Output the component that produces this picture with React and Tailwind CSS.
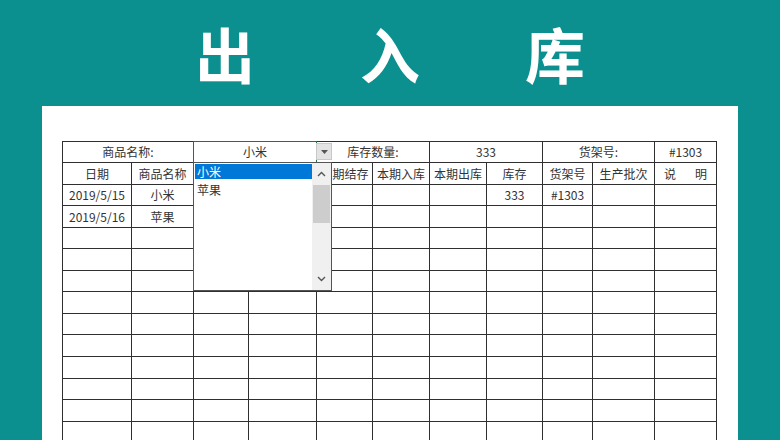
import React from 'react';

const cols = [69, 62, 55, 68, 56, 57, 57, 56, 50, 62, 62];

const rowH = [
  'h-[21px]', 'h-[22px]', 'h-[21px]', 'h-[22px]', 'h-[21px]', 'h-[22px]', 'h-[21px]',
  'h-[22px]', 'h-[21px]', 'h-[22px]', 'h-[22px]', 'h-[21px]', 'h-[22px]', 'h-[22px]',
];

// columns 3 and 4 sit under the open list, so their headers are not shown
const headers = ['日期', '商品名称', '', '', '上期结存', '本期入库', '本期出库', '库存', '货架号', '生产批次'];

const body = [
  ['2019/5/15', '小米', '', '', '', '', '', '333', '#1303', '', ''],
  ['2019/5/16', '苹果', '', '', '', '', '', '', '', '', ''],
  ...Array.from({ length: 10 }, () => Array(11).fill('')),
];

const cell = 'border border-[#2f2f2f] p-0 text-center align-middle whitespace-nowrap overflow-hidden';

const Dropdown = () => (
  <>
    {/* selected cell outline */}
    <div className="absolute left-[131px] top-0 w-[124px] h-[22px] border border-[#217346]" />
    {/* arrow button */}
    <div className="absolute left-[254px] top-[2px] w-[16px] h-[17px] bg-[#e3e3e3] border border-[#c8c8c8] flex items-center justify-center">
      <svg width="7" height="4" viewBox="0 0 7 4"><path d="M0 0h7L3.5 4z" fill="#555" /></svg>
    </div>
    {/* list */}
    <div className="absolute left-[131px] top-[21px] w-[139px] h-[129px] bg-white border border-[#555] flex">
      <div className="flex-1 flex flex-col pt-px pl-px">
        <div className="h-[15px] bg-[#0078d7] text-white leading-[15px] pl-[2px]">小米</div>
        <div className="mt-[3px] h-[16px] text-[#333] leading-[16px] pl-[2px]">苹果</div>
      </div>
      <div className="w-[19px] bg-[#f0f0f0] flex flex-col items-center">
        <div className="h-[22px] flex items-center justify-center">
          <svg width="9" height="6" viewBox="0 0 9 6"><path d="M1 5l3.5-3.5L8 5" stroke="#555" strokeWidth="1.4" fill="none" /></svg>
        </div>
        <div className="w-[17px] h-[38px] bg-[#cdcdcd]" />
        <div className="flex-1" />
        <div className="h-[22px] flex items-center justify-center">
          <svg width="9" height="6" viewBox="0 0 9 6"><path d="M1 1l3.5 3.5L8 1" stroke="#555" strokeWidth="1.4" fill="none" /></svg>
        </div>
      </div>
    </div>
  </>
);

export default function App() {
  return (
    <div
      className="w-[780px] h-[440px] overflow-hidden bg-[#0b8f8f] flex flex-col text-[12px] text-[#333]"
      style={{ fontFamily: '"Noto Sans CJK SC", "Noto Sans", sans-serif' }}
    >
      <div className="h-[106px] shrink-0 flex items-center justify-center gap-[105px] text-white font-bold text-[60px] leading-none">
        <span>出</span>
        <span>入</span>
        <span>库</span>
      </div>
      <div className="mx-[42px] flex-1 bg-white pt-[35px] pl-[20px]">
        <div className="relative w-[655px]">
          <table className="border-collapse table-fixed w-[655px]">
            <colgroup>
              {cols.map((w, i) => (
                <col key={i} style={{ width: w }} />
              ))}
            </colgroup>
            <tbody>
              <tr className={rowH[0]}>
                <td colSpan={2} className={cell}>商品名称:</td>
                <td colSpan={2} className={cell}>小米</td>
                <td colSpan={2} className={cell}>库存数量:</td>
                <td colSpan={2} className={cell}>333</td>
                <td colSpan={2} className={cell}>货架号:</td>
                <td className={cell}>#1303</td>
              </tr>
              <tr className={rowH[1]}>
                {headers.map((h, i) => (
                  <td key={i} className={cell}>{h}</td>
                ))}
                <td className={cell}>
                  <div className="flex justify-between px-[9px]">
                    <span>说</span>
                    <span>明</span>
                  </div>
                </td>
              </tr>
              {body.map((r, i) => (
                <tr key={i} className={rowH[i + 2]}>
                  {r.map((v, j) => (
                    <td key={j} className={cell}>{v}</td>
                  ))}
                </tr>
              ))}
            </tbody>
          </table>
          <Dropdown />
        </div>
      </div>
    </div>
  );
}
